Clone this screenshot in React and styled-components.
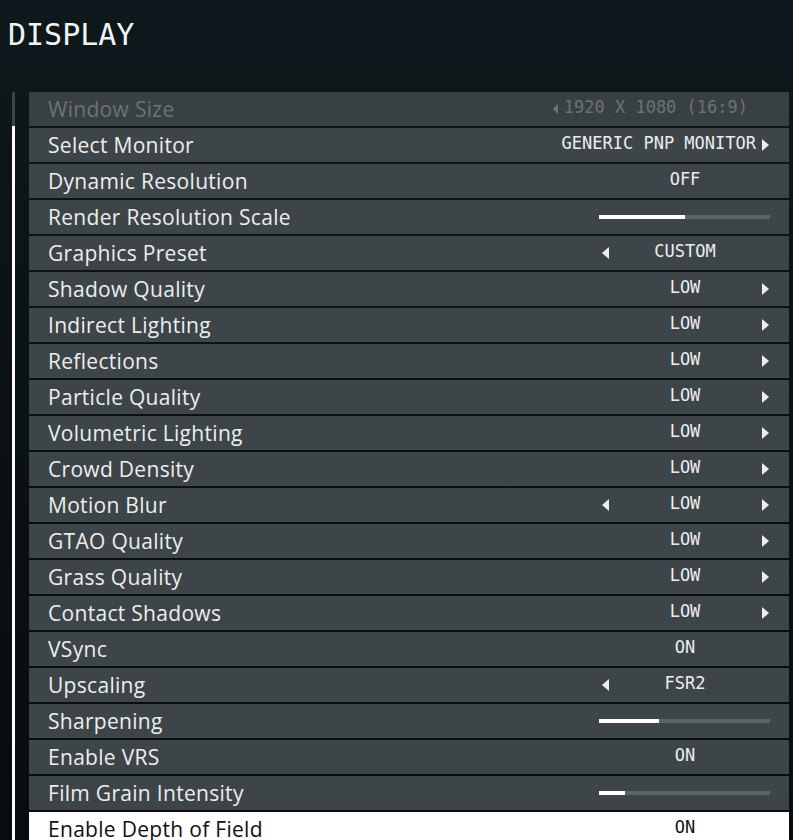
import styled, { createGlobalStyle } from "styled-components";

const GlobalStyle = createGlobalStyle`
  html, body {
    margin: 0;
    padding: 0;
    background: #0b1114;
  }
  body {
    height: 840px;
    overflow: hidden;
  }
`;

const Page = styled.main`
  width: 793px;
  height: 840px;
  overflow: hidden;
  background: linear-gradient(180deg, #0f181c 0%, #0b1215 40%, #080c0e 100%);
`;

const Title = styled.h1`
  margin: 0;
  padding: 20px 0 0 8px;
  height: 92px;
  box-sizing: border-box;
  font-family: "DejaVu Sans Mono", monospace;
  font-size: 30px;
  font-weight: 400;
  line-height: 1;
  color: #f2f4f4;
`;

const Body = styled.div`
  display: flex;
  align-items: flex-start;
  gap: 14px;
  padding-left: 12px;
`;

const Scrollbar = styled.div`
  width: 3px;
  height: 760px;
  display: flex;
  flex-direction: column;
  background: #ffffff;

  &::before {
    content: "";
    height: 34px;
    background: #3c4448;
  }
`;

const List = styled.div`
  width: 760px;
  display: flex;
  flex-direction: column;
  gap: 2px;
`;

const Row = styled.div`
  height: 34px;
  display: flex;
  align-items: center;
  justify-content: space-between;
  padding: 0 16px 0 19px;
  background: ${(p) => (p.$active ? "#ffffff" : p.$disabled ? "#394044" : "#3e4549")};
  color: ${(p) => (p.$active ? "#111111" : p.$disabled ? "#6c7276" : "#eceeee")};
  flex-shrink: 0;
`;

const Label = styled.span`
  font-family: "Open Sans", sans-serif;
  font-size: 21px;
  letter-spacing: 0.3px;
  line-height: 1;
  padding-top: 1px;
`;

const Control = styled.div`
  width: 176px;
  display: grid;
  grid-template-columns: 16px 1fr 16px;
  align-items: center;
`;

const Wide = styled.div`
  display: flex;
  align-items: center;
  gap: 6px;
  margin-right: ${(p) => p.$mr || 0}px;
`;

const Value = styled.span`
  font-family: "DejaVu Sans Mono", monospace;
  font-size: 17px;
  line-height: 1;
  text-align: center;
  text-transform: uppercase;
  grid-column: 2;
  transform: scaleY(1.05);
  margin-bottom: 3px;
`;

const Arrow = styled.span`
  width: 0;
  height: 0;
  border-top: 6px solid transparent;
  border-bottom: 6px solid transparent;
  ${(p) =>
    p.$dir === "left"
      ? `border-right: 7px solid currentColor;`
      : `border-left: 7px solid currentColor;`}
  justify-self: center;
  grid-column: ${(p) => (p.$dir === "left" ? 1 : 3)};
  ${(p) => p.$small && `border-top-width: 5px; border-bottom-width: 5px; border-right-width: 5px;`}
`;

const Track = styled.div`
  width: 171px;
  height: 4px;
  margin-right: 3px;
  background: #5e6569;
  display: flex;
`;

const Fill = styled.div`
  height: 100%;
  background: #ffffff;
`;

const settings = [
  { label: "Window Size", type: "wide", value: "1920 X 1080 (16:9)", left: true, disabled: true },
  { label: "Select Monitor", type: "wide", value: "GENERIC PNP MONITOR", right: true },
  { label: "Dynamic Resolution", value: "OFF" },
  { label: "Render Resolution Scale", type: "slider", value: 50 },
  { label: "Graphics Preset", value: "CUSTOM", left: true },
  { label: "Shadow Quality", value: "LOW", right: true },
  { label: "Indirect Lighting", value: "LOW", right: true },
  { label: "Reflections", value: "LOW", right: true },
  { label: "Particle Quality", value: "LOW", right: true },
  { label: "Volumetric Lighting", value: "LOW", right: true },
  { label: "Crowd Density", value: "LOW", right: true },
  { label: "Motion Blur", value: "LOW", left: true, right: true },
  { label: "GTAO Quality", value: "LOW", right: true },
  { label: "Grass Quality", value: "LOW", right: true },
  { label: "Contact Shadows", value: "LOW", right: true },
  { label: "VSync", value: "ON" },
  { label: "Upscaling", value: "FSR2", left: true },
  { label: "Sharpening", type: "slider", value: 35 },
  { label: "Enable VRS", value: "ON" },
  { label: "Film Grain Intensity", type: "slider", value: 15 },
  { label: "Enable Depth of Field", value: "ON", active: true },
];

const SettingControl = ({ item }) => {
  if (item.type === "slider") {
    return (
      <Track>
        <Fill style={{ width: `${item.value}%` }} />
      </Track>
    );
  }
  if (item.type === "wide") {
    return (
      <Wide $mr={item.right ? 4 : 25}>
        {item.left && <Arrow $dir="left" $small />}
        <Value>{item.value}</Value>
        {item.right && <Arrow $dir="right" />}
      </Wide>
    );
  }
  return (
    <Control>
      {item.left && <Arrow $dir="left" />}
      <Value>{item.value}</Value>
      {item.right && <Arrow $dir="right" />}
    </Control>
  );
};

const App = () => {
  return (
    <Page>
      <GlobalStyle />
      <Title>DISPLAY</Title>
      <Body>
        <Scrollbar />
        <List>
          {settings.map((item) => (
            <Row key={item.label} $active={item.active} $disabled={item.disabled}>
              <Label>{item.label}</Label>
              <SettingControl item={item} />
            </Row>
          ))}
        </List>
      </Body>
    </Page>
  );
};

export default App;
